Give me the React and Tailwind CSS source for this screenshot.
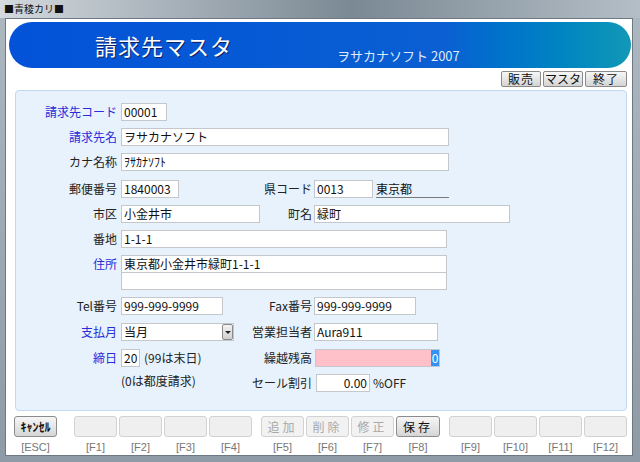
import React from 'react';

const FONT = "font-['Noto_Sans_CJK_JP','Noto_Sans',sans-serif]";

function Field({ w, children, className = '' }) {
  return (
    <div className={`h-[18px] ${w} bg-white border border-[#c4c8cc] flex items-center px-[2px] text-[12px] leading-none text-[#111] whitespace-nowrap overflow-hidden ${className}`}>
      {children}
    </div>
  );
}

function Label({ children, blue }) {
  return (
    <div className={`w-[105px] pr-[4px] text-right text-[12px] leading-none whitespace-nowrap ${blue ? 'text-[#2a2ad8]' : 'text-[#222]'}`}>
      {children}
    </div>
  );
}

function RightLabel({ children }) {
  return (
    <div className="w-[50px] mr-[2px] flex justify-end text-[12px] leading-none whitespace-nowrap text-[#222]">
      <span>{children}</span>
    </div>
  );
}

function FKey({ label, text, kind = 'empty', wide, tight }) {
  const base = `h-[21px] ${wide ? 'w-[44px]' : 'w-[43px]'} rounded-[3px] flex items-center justify-center text-[12px] leading-none whitespace-nowrap ${tight ? 'tracking-normal font-bold' : 'tracking-[3px]'}`;
  const styles = {
    empty: 'bg-[#efefef] border border-[#d2d2d2]',
    disabled: 'bg-[#f2f2f2] border border-[#d2d2d2] text-[#a8a8a8]',
    active: 'bg-linear-to-b from-[#f6f6f6] to-[#d6d6d6] border border-[#8c8c8c] text-[#111]',
  };
  return (
    <div className="flex flex-col items-center">
      <div className={`${base} ${styles[kind]}`}>{text}</div>
      <div className="mt-[5px] text-[11px] leading-none text-[#777] font-['Liberation_Sans',sans-serif]">{label}</div>
    </div>
  );
}

export default function App() {
  return (
    <div className={`w-[640px] h-[462px] flex flex-col bg-linear-to-b from-[#aeb8c1] to-[#8e9aa5] ${FONT}`}>
      {/* title bar */}
      <div className="h-[18px] flex items-center pl-[4px] bg-linear-to-r from-[#d3d9de] via-[#7b8994] via-55% to-[#b4bec6]">
        <span className="text-[10px] leading-none text-[#111]">■青稜カリ■</span>
      </div>

      {/* client area */}
      <div className="ml-[5px] mr-[7px] h-[438px] bg-white border border-[#6d7883] flex flex-col">
        {/* banner */}
        <div className="ml-[3px] mt-[3px] w-[622px] h-[46px] rounded-full bg-linear-to-r from-[#0352d8] via-[#0b5fd2] via-70% to-[#1298b6] flex items-center pl-[86px]">
          <div className="w-[242px] text-white text-[22px] leading-none tracking-[1px] [text-shadow:1px_1px_0_#0a1f66]">請求先マスタ</div>
          <div className="mt-[20px] text-[#dfe9f8] text-[13px] leading-none">ヲサカナソフト 2007</div>
        </div>

        {/* nav buttons */}
        <div className="mt-[3px] mr-[5px] flex justify-end gap-[2px]">
          {[['販売', 'w-[40px] tracking-[1px]'], ['マスタ', 'w-[40px]'], ['終了', 'w-[42px] tracking-[1px]']].map(([t, w]) => (
            <div key={t} className={`${w} h-[16px] rounded-[2px] border border-[#8a8a8a] bg-linear-to-b from-[#f7f7f7] to-[#d4d4d4] flex items-center justify-center text-[12px] leading-none text-[#111] whitespace-nowrap`}>{t}</div>
          ))}
        </div>

        {/* form panel */}
        <div className="mt-[3px] ml-[9px] w-[612px] h-[321px] bg-[#e7f2fd] border border-[#c3d9ef] rounded-[4px] pt-[12px] flex flex-col">
          <div className="flex items-center">
            <Label blue>請求先コード</Label>
            <Field w="w-[46px]">00001</Field>
          </div>
          <div className="mt-[7px] flex items-center">
            <Label blue>請求先名</Label>
            <Field w="w-[328px]">ヲサカナソフト</Field>
          </div>
          <div className="mt-[7px] flex items-center">
            <Label>カナ名称</Label>
            <Field w="w-[328px]">ｦｻｶﾅｿﾌﾄ</Field>
          </div>
          <div className="mt-[9px] flex items-center">
            <Label>郵便番号</Label>
            <div className="w-[141px]"><Field w="w-[58px]">1840003</Field></div>
            <RightLabel>県コード</RightLabel>
            <Field w="w-[59px]">0013</Field>
            <div className="ml-[3px] w-[73px] h-[17px] border-b border-[#7a7a7a] text-[12px] leading-[15px] text-[#111]">東京都</div>
          </div>
          <div className="mt-[7px] flex items-center">
            <Label>市区</Label>
            <div className="w-[141px]"><Field w="w-[139px]">小金井市</Field></div>
            <RightLabel>町名</RightLabel>
            <Field w="w-[196px]">緑町</Field>
          </div>
          <div className="mt-[7px] flex items-center">
            <Label>番地</Label>
            <Field w="w-[326px]">1-1-1</Field>
          </div>
          <div className="mt-[7px] flex items-start">
            <div className="pt-[3px]"><Label blue>住所</Label></div>
            <div className="flex flex-col">
              <Field w="w-[326px]">東京都小金井市緑町1-1-1</Field>
              <Field w="w-[326px]" className="-mt-px">{''}</Field>
            </div>
          </div>
          <div className="mt-[7px] flex items-center">
            <Label>Tel番号</Label>
            <div className="w-[141px]"><Field w="w-[102px]">999-999-9999</Field></div>
            <RightLabel>Fax番号</RightLabel>
            <Field w="w-[102px]">999-999-9999</Field>
          </div>
          <div className="mt-[8px] flex items-center">
            <Label blue>支払月</Label>
            <div className="w-[141px]">
              <div className="w-[113px] h-[18px] bg-white border border-[#c4c8cc] flex items-center">
                <span className="flex-1 pl-[2px] text-[12px] leading-none text-[#111]">当月</span>
                <div className="w-[11px] h-[16px] border border-[#8a8a8a] rounded-[2px] bg-linear-to-b from-[#f4f4f4] to-[#d0d0d0] flex items-center justify-center">
                  <div className="w-0 h-0 border-l-[3px] border-r-[3px] border-t-[3px] border-l-transparent border-r-transparent border-t-[#222]" />
                </div>
              </div>
            </div>
            <RightLabel>営業担当者</RightLabel>
            <Field w="w-[124px]">Aura911</Field>
          </div>
          <div className="mt-[8px] flex items-center">
            <Label blue>締日</Label>
            <div className="w-[141px] flex items-center">
              <Field w="w-[19px]">20</Field>
              <span className="ml-[4px] text-[12px] leading-none text-[#222]">(99は末日)</span>
            </div>
            <RightLabel>繰越残高</RightLabel>
            <div className="ml-px w-[125px] h-[18px] bg-[#fec0c9] border border-[#c4c8cc] flex justify-end items-stretch">
              <span className="w-[8px] bg-[#3392f5] text-white text-[12px] leading-[16px] text-center">0</span>
            </div>
          </div>
          <div className="mt-[7px] flex items-center">
            <Label>{''}</Label>
            <div className="w-[141px] -mt-[4px] text-[12px] leading-none text-[#222]">(0は都度請求)</div>
            <RightLabel>セール割引</RightLabel>
            <Field w="w-[54px] ml-[2px]" className="justify-end">0.00</Field>
            <span className="ml-[3px] text-[12px] leading-none text-[#222]">%OFF</span>
          </div>
        </div>

        {/* function keys */}
        <div className="mt-[5px] ml-[8px] flex items-start">
          <FKey label="[ESC]" text="ｷｬﾝｾﾙ" kind="active" tight />
          <div className="ml-[17px] flex gap-[2px]">
            <FKey label="[F1]" />
            <FKey label="[F2]" />
            <FKey label="[F3]" />
            <FKey label="[F4]" />
          </div>
          <div className="ml-[9px] flex gap-[2px]">
            <FKey label="[F5]" text="追加" kind="disabled" />
            <FKey label="[F6]" text="削除" kind="disabled" />
            <FKey label="[F7]" text="修正" kind="disabled" />
            <FKey label="[F8]" text="保存" kind="active" wide />
          </div>
          <div className="ml-[9px] flex gap-[2px]">
            <FKey label="[F9]" />
            <FKey label="[F10]" />
            <FKey label="[F11]" />
            <FKey label="[F12]" />
          </div>
        </div>
      </div>
    </div>
  );
}
